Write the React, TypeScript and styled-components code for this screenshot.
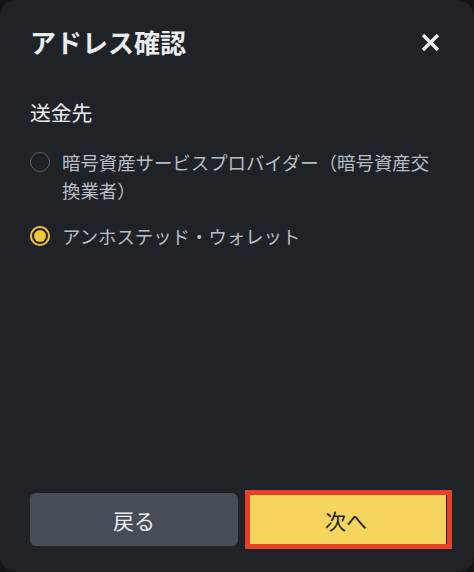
import React, { useState } from "react";
import styled, { createGlobalStyle } from "styled-components";

const GlobalStyle = createGlobalStyle`
  html, body {
    margin: 0;
    padding: 0;
    background: #141518;
  }
  body {
    font-family: "Noto Sans CJK JP", "Noto Sans", sans-serif;
  }
`;

// whole dialog
const Dialog = styled.div`
  height: 572px;
  box-sizing: border-box;
  background: #1f2226;
  border-radius: 16px;
  display: flex;
  flex-direction: column;
  padding: 0 28px 26px 30px;
`;

const Header = styled.div`
  display: flex;
  align-items: center;
  justify-content: space-between;
  height: 36px;
  margin-top: 24px;
`;

const Title = styled.h1`
  margin: 0;
  font-size: 26px;
  font-weight: 700;
  color: #eaecef;
  line-height: 36px;
`;

const CloseButton = styled.button`
  border: none;
  background: none;
  padding: 0;
  width: 20px;
  height: 20px;
  margin-right: 6px;
  display: flex;
  align-items: center;
  justify-content: center;
  cursor: pointer;
`;

const Body = styled.div`
  flex: 1;
  padding-top: 38px;
`;

const Label = styled.div`
  font-size: 20.8px;
  line-height: 28px;
  color: #eaecef;
`;

const OptionList = styled.div`
  display: flex;
  flex-direction: column;
  gap: 18px;
  margin-top: 22px;
`;

const OptionRow = styled.label`
  display: flex;
  align-items: flex-start;
  gap: 12px;
  cursor: pointer;
`;

const Radio = styled.span<{ $checked: boolean }>`
  flex: none;
  width: 20px;
  height: 20px;
  box-sizing: border-box;
  margin-top: 4px;
  border-radius: 50%;
  border: ${(p) => (p.$checked ? "2px solid #f0c53c" : "1.5px solid #5b616b")};
  display: flex;
  align-items: center;
  justify-content: center;
  &::after {
    content: "";
    display: ${(p) => (p.$checked ? "block" : "none")};
    width: 12px;
    height: 12px;
    border-radius: 50%;
    background: #f0c53c;
  }
`;

const OptionText = styled.span`
  font-size: 18.4px;
  line-height: 28px;
  color: #b7bdc6;
  padding-right: 4px;
`;

const Footer = styled.div`
  display: flex;
  gap: 8px;
`;

const Button = styled.button<{ $primary?: boolean }>`
  position: relative;
  height: 53px;
  border: none;
  border-radius: ${(p) => (p.$primary ? "0" : "6px")};
  background: ${(p) => (p.$primary ? "#f5d55d" : "#474d57")};
  color: ${(p) => (p.$primary ? "#1e2026" : "#eaecef")};
  font-family: "Noto Sans CJK JP", "Noto Sans", sans-serif;
  font-size: 21px;
  width: ${(p) => (p.$primary ? "auto" : "208px")};
  flex: ${(p) => (p.$primary ? "1" : "none")};
  cursor: pointer;
`;

// red highlight box over the next button
const Highlight = styled.span`
  position: absolute;
  top: -3px;
  bottom: -3px;
  left: -1px;
  right: -6px;
  border: 5px solid #e8412a;
  pointer-events: none;
`;

const options = [
  "暗号資産サービスプロバイダー（暗号資産交換業者）",
  "アンホステッド・ウォレット",
];

export default function App() {
  const [selected, setSelected] = useState(1);

  return (
    <>
      <GlobalStyle />
      <Dialog>
        <Header>
          <Title>アドレス確認</Title>
          <CloseButton aria-label="close">
            <svg width="19" height="19" viewBox="0 0 19 19">
              <path d="M2 2 L17 17 M17 2 L2 17" stroke="#eaecef" strokeWidth="3.3" strokeLinecap="butt" />
            </svg>
          </CloseButton>
        </Header>
        <Body>
          <Label>送金先</Label>
          <OptionList>
            {options.map((text, i) => (
              <OptionRow key={text} onClick={() => setSelected(i)}>
                <Radio $checked={selected === i} />
                <OptionText>{text}</OptionText>
              </OptionRow>
            ))}
          </OptionList>
        </Body>
        <Footer>
          <Button>戻る</Button>
          <Button $primary>
            次へ
            <Highlight />
          </Button>
        </Footer>
      </Dialog>
    </>
  );
}
